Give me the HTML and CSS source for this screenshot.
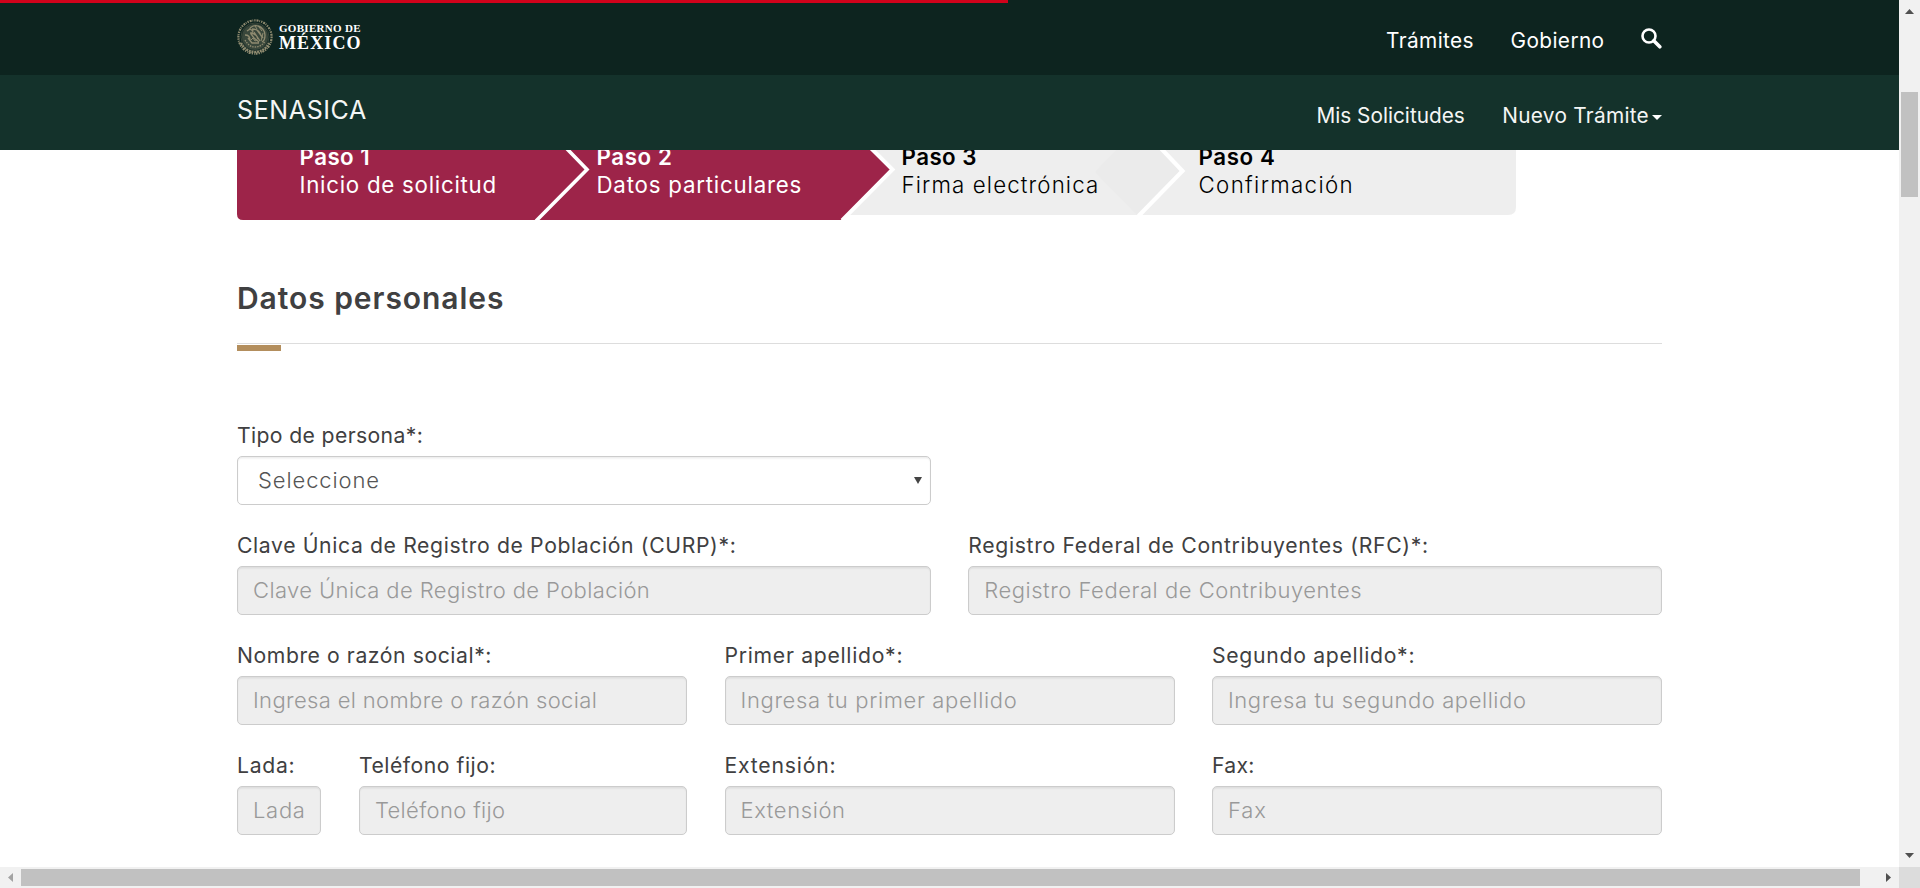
FILE: index.html
```
<!DOCTYPE html>
<html lang="es">
<head>
<meta charset="utf-8">
<title>SENASICA - Datos particulares</title>
<link rel="stylesheet" href="styles.css">
</head>
<body>
<div class="window">
  <div class="viewport">
    <header class="header">
      <div class="progress"></div>
      <div class="bar bar-top">
        <div class="container bar-inner">
          <a class="logo">
            <svg class="seal" viewBox="0 0 36 36" fill="none" stroke="#8f8b70">
              <circle cx="18" cy="18" r="16.6" stroke-width="2.2" stroke-dasharray="1.3 1 2 .8 .8 1.1"/>
              <circle cx="18" cy="18" r="14" stroke-width=".7" stroke="#4a5244"/>
              <circle cx="18" cy="18" r="13" fill="#39473b" stroke="none"/>
              <path d="M4 24c3 6 8 9 14 9s11-3 14-9" stroke-width="2.200" stroke-dasharray="2 .8"/>
              <path d="M8 21c3 5 6 7 10 7s8-2 10-6" stroke-width="1.300" stroke-dasharray="1.500 1"/>
              <path d="M12 11c2-4 6-5 9-4 4 1 7 5 7 9 0 3-1 6-3 7M15 10c4 0 8 2 9 7M13 14c4 0 7 2 8 6M10 12l3-2 3 2-2 3 3 4 5 4M8 16c3 0 5 2 5 5M20 11l6 8M17 13l6 9M11 19l4 5h7" stroke-width="1.300"/>
              <path d="M22 8l3 4M18 7l2 3M26 14l-2 8M14 21l2-2 2 3 2-1" stroke-width="1"/>
            </svg>
            <span class="logo-text">
              <span class="logo-small">GOBIERNO DE</span>
              <span class="logo-big">MÉXICO</span>
            </span>
          </a>
          <nav class="menu menu-top">
            <a class="t-tramites">Trámites</a>
            <a class="t-gobierno">Gobierno</a>
            <svg class="search" viewBox="0 0 21 21" fill="none" stroke="#fff">
              <circle cx="8" cy="8" r="6.500" stroke-width="2.600"/>
              <path d="M12.800 12.800l6 6" stroke-width="3.600" stroke-linecap="round"/>
            </svg>
          </nav>
        </div>
      </div>
      <div class="bar bar-sub">
        <div class="container bar-inner">
          <a class="brand">SENASICA</a>
          <nav class="menu menu-sub">
            <a class="t-solicitudes">Mis Solicitudes</a>
            <a class="t-nuevo">Nuevo Trámite<span class="caret"></span></a>
          </nav>
        </div>
      </div>
    </header>
    <main class="container content">
      <section class="steps">
        <svg class="steps-shape" viewBox="0 0 1280 101">
          <path d="M580 0H1271q8 0 8 8V87q0 8-8 8H580z" fill="#eee"/>
          <path d="M900 95L858 52 900 9 948 51 903 95z" fill="#ebebeb"/>
          <path d="M897 0L945.500 51 901.500 96" fill="none" stroke="#fff" stroke-width="4.200"/>
          <path d="M0 0H602L653.500 49.500 604 100H6q-6 0-6-6z" fill="#9d2449"/>
          <path d="M606 0L655.500 49.500 605 100.500" fill="none" stroke="#fff" stroke-width="4"/>
          <path d="M302 0L350 49.500 299 101" fill="none" stroke="#fff" stroke-width="3.600"/>
        </svg>
        <div class="step step-1"><b class="p1">Paso 1</b><span>Inicio de solicitud</span></div>
        <div class="step step-2"><b class="p2">Paso 2</b><span>Datos particulares</span></div>
        <div class="step step-3"><b class="p3">Paso 3</b><span>Firma electrónica</span></div>
        <div class="step step-4"><b class="p4">Paso 4</b><span>Confirmación</span></div>
      </section>
      <h3 class="title">Datos personales</h3>
      <div class="accent"></div>
      <form class="form">
        <div class="field half">
          <label class="l-tipo">Tipo de persona*:</label>
          <div class="control select"><span>Seleccione</span><i class="arrow"></i></div>
        </div>
        <div class="field half start">
          <label class="l-curp">Clave Única de Registro de Población (CURP)*:</label>
          <div class="control c-curp">Clave Única de Registro de Población</div>
        </div>
        <div class="field half">
          <label class="l-rfc">Registro Federal de Contribuyentes (RFC)*:</label>
          <div class="control c-rfc">Registro Federal de Contribuyentes</div>
        </div>
        <div class="field third">
          <label class="l-nombre">Nombre o razón social*:</label>
          <div class="control c-nombre">Ingresa el nombre o razón social</div>
        </div>
        <div class="field third">
          <label class="l-primer">Primer apellido*:</label>
          <div class="control c-primer">Ingresa tu primer apellido</div>
        </div>
        <div class="field third">
          <label class="l-segundo">Segundo apellido*:</label>
          <div class="control c-segundo">Ingresa tu segundo apellido</div>
        </div>
        <div class="field lada">
          <label class="l-lada">Lada:</label>
          <div class="control c-lada">Lada</div>
        </div>
        <div class="field phone">
          <label class="l-tel">Teléfono fijo:</label>
          <div class="control c-tel">Teléfono fijo</div>
        </div>
        <div class="field third">
          <label class="l-ext">Extensión:</label>
          <div class="control c-ext">Extensión</div>
        </div>
        <div class="field third">
          <label class="l-fax">Fax:</label>
          <div class="control c-fax">Fax</div>
        </div>
      </form>
    </main>
  </div>
  <div class="vscroll">
    <svg class="sb" viewBox="0 0 21 21"><path d="M6 14h9l-4.500-5z" fill="#505050"/></svg>
    <div class="vtrack"><div class="vthumb"></div></div>
    <svg class="sb" viewBox="0 0 21 21"><path d="M6 7h9l-4.500 5z" fill="#505050"/></svg>
  </div>
  <div class="hscroll">
    <svg class="sb" viewBox="0 0 21 21"><path d="M13 6v9l-5-4.500z" fill="#a3a3a3"/></svg>
    <div class="hthumb"></div>
    <svg class="sb" viewBox="0 0 21 21"><path d="M8 6v9l5-4.500z" fill="#505050"/></svg>
  </div>
  <div class="corner"></div>
</div>
</body>
</html>
```
FILE: styles.css
```
* { box-sizing: border-box; }
body {
  margin: 0;
  font-family: Inter, "Open Sans", sans-serif;
  color: #404041;
  background: #fff;
}
.window {
  display: grid;
  grid-template-columns: 1fr 21px;
  grid-template-rows: 1fr 21px;
  width: 1920px;
  height: 888px;
  overflow: hidden;
}
.viewport { position: relative; overflow: hidden; min-height: 0; }
.container { width: 1425px; margin: 0 auto; }

/* Fixed header that covers the scrolled page */
.header { position: absolute; top: 0; left: 0; right: 0; z-index: 2; }
.progress {
  position: absolute;
  top: 0;
  left: 0;
  width: 1008px;
  height: 3px;
  background: #d0021b;
}
.bar { height: 75px; }
.bar-top { background: #0d241f; }
.bar-sub { background: #14322b; }
.bar-inner { display: flex; justify-content: space-between; height: 100%; }
.logo { display: flex; gap: 6px; padding-top: 19px; color: #fff; }
.seal { width: 36px; height: 36px; }
.logo-text {
  display: flex;
  flex-direction: column;
  padding-top: 3px;
  font-family: "Liberation Serif", serif;
  font-weight: 700;
}
.logo-small { font-size: 11px; line-height: 13px; letter-spacing: 0.3px; }
.logo-big { font-size: 18px; line-height: 17px; letter-spacing: 1.1px; }
.menu { display: flex; color: #fff; font-size: 20.8px; font-weight: 400; line-height: 31px; }
.menu-top { gap: 36.5px; padding-top: 25px; }
.menu-sub { gap: 37.5px; padding-top: 25px; color: #f4f6f5; }
.search { width: 21px; height: 21px; margin-top: 3px; }
.caret {
  display: inline-block;
  margin-left: 3px;
  vertical-align: 3px;
  border: 5px solid transparent;
  border-top-color: #fff;
  border-bottom: 0;
}
.brand { padding-top: 19px; color: #f4f6f5; font-size: 25px; line-height: 33px; letter-spacing: 0.62px; }
.t-tramites { letter-spacing: 0.4px; }
.t-gobierno { letter-spacing: 0.4px; }
.t-solicitudes { letter-spacing: 0; }
.t-nuevo { letter-spacing: 0.28px; }

/* Wizard steps */
.content { padding-top: 120px; }
.steps {
  position: relative;
  display: grid;
  grid-template-columns: 297px 305px 297px 318px;
  width: 1280px;
  height: 101px;
  padding: 23px 0 0 62.5px;
}
.steps-shape { position: absolute; top: 0; left: 0; width: 1280px; height: 101px; }
.step { position: relative; display: flex; flex-direction: column; font-size: 22.3px; line-height: 28px; }
.step b { font-weight: 600; letter-spacing: 0.45px; }
.step-1, .step-2 { color: #fff; }
.step-3, .step-4 { color: #000; font-weight: 300; }
.step .p2, .step .p4 { letter-spacing: 0.6px; }
.step-1 { letter-spacing: 0.73px; }
.step-2 { letter-spacing: 0.78px; }
.step-3 { letter-spacing: 1.12px; }
.step-4 { letter-spacing: 1.34px; }

.title {
  height: 123px;
  margin: 0;
  padding-top: 57px;
  border-bottom: 1px solid #ddd;
  font-size: 30px;
  font-weight: 600;
  line-height: 40px;
  letter-spacing: 0.95px;
}
.accent { width: 44px; height: 6px; margin-top: 1px; background: #b38e5d; }

/* Form */
.form {
  display: grid;
  grid-template-columns: repeat(12, 84.375px);
  column-gap: 37.5px;
  row-gap: 24px;
  padding-top: 68px;
}
.field { display: flex; flex-direction: column; gap: 5px; }
.half { grid-column: span 6; }
.start { grid-column: 1 / span 6; }
.third { grid-column: span 4; }
.lada { grid-column: span 1; }
.phone { grid-column: span 3; }
.field label { font-size: 21.2px; font-weight: 400; line-height: 32px; white-space: nowrap; }
.control {
  height: 49px;
  padding-left: 15px;
  border: 1px solid #ccc;
  border-radius: 5px;
  background: #eee;
  box-shadow: inset 0 1.5px 1.5px rgba(0, 0, 0, 0.075);
  color: #999;
  font-size: 22px;
  font-weight: 300;
  line-height: 47px;
  white-space: nowrap;
}
.select {
  display: flex;
  align-items: center;
  justify-content: space-between;
  padding: 0 8px 0 20px;
  background: #fff;
  color: #555;
  letter-spacing: 0.9px;
}
.arrow { border: 4px solid transparent; border-top: 7px solid #444; border-bottom: 0; }

/* Tracking per text */
.l-tipo { letter-spacing: 0.36px; }
.l-curp { letter-spacing: 0.62px; }
.l-rfc { letter-spacing: 0.66px; }
.l-nombre { letter-spacing: 0.56px; }
.l-primer { letter-spacing: 0.7px; }
.l-segundo { letter-spacing: 0.7px; }
.l-lada { letter-spacing: 0.7px; }
.l-tel { letter-spacing: 0.52px; }
.l-ext { letter-spacing: 0.8px; }
.l-fax { letter-spacing: 0.3px; }
.c-curp { letter-spacing: 0.39px; }
.c-rfc { letter-spacing: 0.53px; }
.c-nombre { letter-spacing: 0.35px; }
.c-primer { letter-spacing: 0.65px; }
.c-segundo { letter-spacing: 0.57px; }
.c-lada { letter-spacing: 0.7px; }
.c-tel { letter-spacing: 0.35px; }
.c-ext { letter-spacing: 0.6px; }
.c-fax { letter-spacing: 0.9px; }

/* Scrollbars */
.vscroll { display: flex; flex-direction: column; background: #f1f1f1; }
.hscroll { display: flex; align-items: center; background: #f1f1f1; }
.sb { flex: none; width: 21px; height: 21px; }
.vtrack { flex: 1; padding: 71px 2px 0; }
.vthumb { height: 105px; background: #c1c1c1; }
.hthumb { width: 1839px; height: 17px; margin-right: 18px; background: #c1c1c1; }
.corner { background: #dcdcdc; }
```
